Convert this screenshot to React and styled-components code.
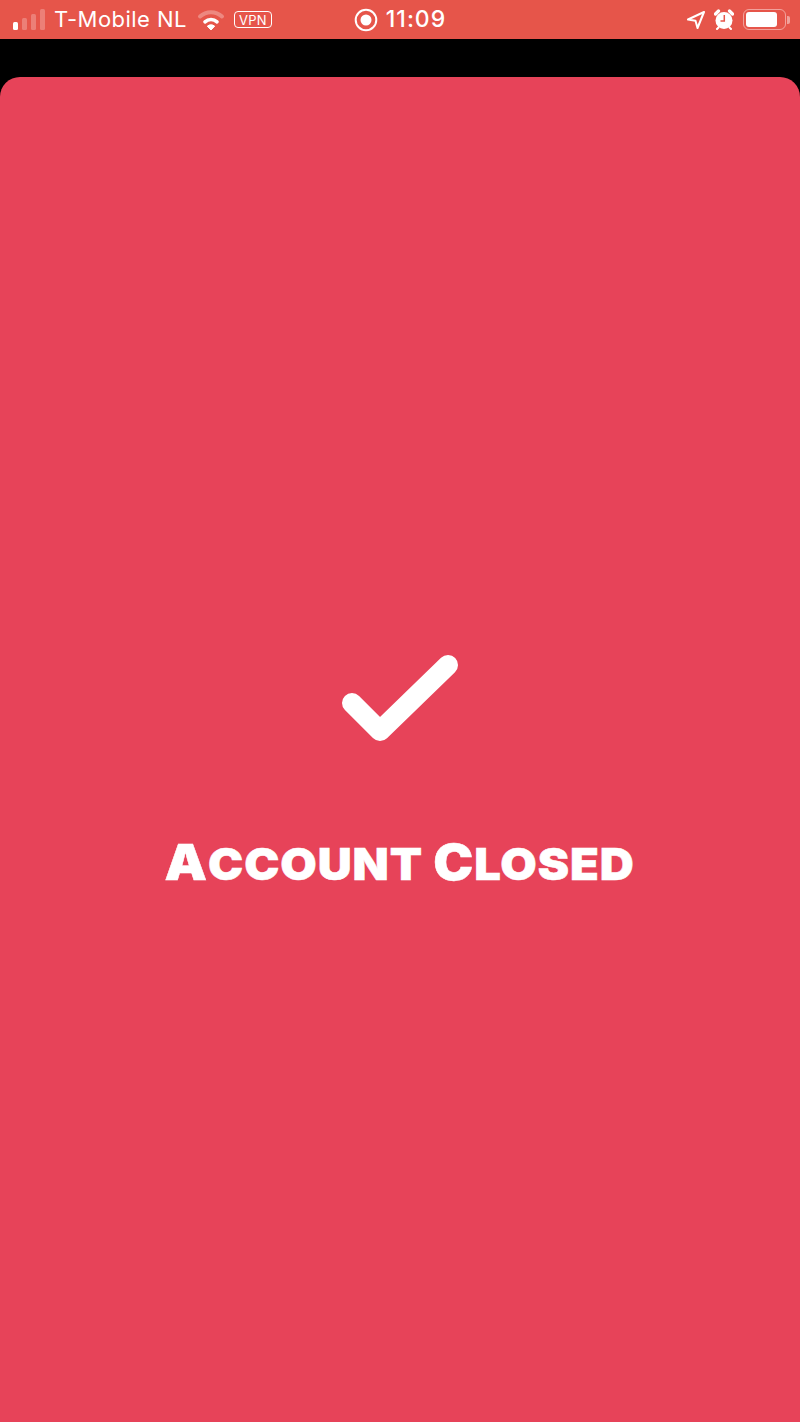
import React from 'react';
import styled, { createGlobalStyle } from 'styled-components';

const GlobalStyle = createGlobalStyle`
  html, body, #root {
    margin: 0;
    padding: 0;
    height: 100%;
  }
  body {
    background-color: #000;
    font-family: Inter, "Liberation Sans", Arial, sans-serif;
  }
`;

const Page = styled.div`
  width: 800px;
  height: 1422px;
  display: flex;
  flex-direction: column;
  overflow: hidden;
  background-color: #000;
`;

const StatusBar = styled.div`
  height: 39px;
  flex-shrink: 0;
  display: grid;
  grid-template-columns: 1fr auto 1fr;
  align-items: center;
  background-color: #e6554a;
  color: #fff;
  box-sizing: border-box;
  padding: 0 10px 0 13px;
`;

const Group = styled.div`
  display: flex;
  align-items: center;
  justify-content: ${props => props.$end ? 'flex-end' : 'flex-start'};
`;

const ClockGroup = styled(Group)`
  margin-left: -3px;
`;

const Signal = styled.div`
  display: flex;
  align-items: flex-end;
  gap: 4px;
  height: 21px;
  margin-right: 9px;
`;

const SignalBar = styled.span`
  width: 5px;
  height: ${props => props.$height}px;
  border-radius: 1.5px;
  background-color: ${props => props.$on ? '#fff' : 'rgba(255, 255, 255, 0.25)'};
`;

const Carrier = styled.span`
  font-size: 22px;
  line-height: 39px;
  letter-spacing: 0.45px;
  margin-right: 10px;
  white-space: nowrap;
`;

const VpnBadge = styled.span`
  width: 38px;
  height: 17px;
  box-sizing: border-box;
  margin-left: 9px;
  display: flex;
  align-items: center;
  justify-content: center;
  border: 1.5px solid #fff;
  border-radius: 4px;
  font-size: 13px;
  letter-spacing: 0.2px;
`;

const Clock = styled.span`
  font-size: 23px;
  line-height: 39px;
  font-weight: 500;
  letter-spacing: 1px;
  margin-left: 8px;
`;

const AlarmIcon = styled.svg`
  margin-left: 9px;
`;

const Battery = styled.div`
  display: flex;
  align-items: center;
  margin-left: 9px;
`;

const BatteryBody = styled.div`
  width: 43px;
  height: 21px;
  box-sizing: border-box;
  padding: 2px;
  border: 1.5px solid rgba(255, 255, 255, 0.45);
  border-radius: 6px;
  display: flex;
  justify-content: flex-start;
`;

const BatteryFill = styled.div`
  width: 31px;
  border-radius: 3px;
  background-color: #fff;
`;

const BatteryCap = styled.div`
  width: 3px;
  height: 8px;
  margin-left: 1px;
  border-radius: 0 2px 2px 0;
  background-color: rgba(255, 255, 255, 0.45);
`;

const BlackBand = styled.div`
  height: 38px;
  flex-shrink: 0;
`;

const Card = styled.div`
  flex: 1;
  display: flex;
  flex-direction: column;
  align-items: center;
  padding-top: 577px;
  background-color: #e74359;
  border-radius: 20px 20px 0 0;
`;

const CheckIcon = styled.svg`
  width: 118px;
  height: 89px;
  display: block;
`;

const Title = styled.h1`
  margin: 94px 0 0;
  font-size: 44px;
  line-height: 50px;
  font-weight: 900;
  letter-spacing: 0.85px;
  text-transform: uppercase;
  white-space: nowrap;
  color: #fff;
  -webkit-text-stroke: 0.5px #fff;
  transform: scaleX(1.07);
`;

const TitleInitial = styled.span`
  font-size: 50px;
`;

const App = () => (
  <Page>
    <GlobalStyle />
    <StatusBar>
      <Group>
        <Signal>
          <SignalBar $on $height={8} />
          <SignalBar $height={12} />
          <SignalBar $height={16} />
          <SignalBar $height={21} />
        </Signal>
        <Carrier>T-Mobile NL</Carrier>
        <svg width="28" height="22" viewBox="0 0 28 22">
          <path d="M3 7.500C9.200 1.700 18.800 1.700 25 7.500" fill="none" stroke="#fff" strokeOpacity="0.3" strokeWidth="4" strokeLinecap="round" />
          <path d="M8 12.800C11.400 9.700 16.600 9.700 20 12.800" fill="none" stroke="#fff" strokeWidth="3.600" strokeLinecap="round" />
          <path d="M14 21l-3.700-3.800c2-1.800 5.400-1.800 7.400 0z" fill="#fff" stroke="#fff" strokeWidth="1" strokeLinejoin="round" />
        </svg>
        <VpnBadge>VPN</VpnBadge>
      </Group>
      <ClockGroup>
        <svg width="24" height="24" viewBox="0 0 24 24">
          <circle cx="12" cy="12" r="10.300" fill="none" stroke="#fff" strokeWidth="2" />
          <circle cx="12" cy="12" r="5.500" fill="#fff" />
        </svg>
        <Clock>11:09</Clock>
      </ClockGroup>
      <Group $end>
        <svg width="18" height="18" viewBox="0 0 18 18">
          <path d="M17 1 1 8.500l7.500 1.200L10.500 17z" fill="none" stroke="#fff" strokeWidth="2" strokeLinejoin="round" />
        </svg>
        <AlarmIcon width="20" height="21" viewBox="0 0 20 21">
          <circle cx="10" cy="11.500" r="8.500" fill="#fff" />
          <path d="M1.500 5 4.500 2M15.500 2 18.500 5" stroke="#fff" strokeWidth="3.200" strokeLinecap="round" />
          <path d="M4.500 18.500 3 20M15.500 18.500 17 20" stroke="#fff" strokeWidth="2" strokeLinecap="round" />
          <path d="M10.300 6v6H6.500" fill="none" stroke="#e6554a" strokeWidth="1.500" />
        </AlarmIcon>
        <Battery>
          <BatteryBody>
            <BatteryFill />
          </BatteryBody>
          <BatteryCap />
        </Battery>
      </Group>
    </StatusBar>
    <BlackBand />
    <Card>
      <CheckIcon viewBox="0 0 118 89">
        <path d="M11 49 39 77 107 11" fill="none" stroke="#fff" strokeWidth="20" strokeLinecap="round" strokeLinejoin="round" />
      </CheckIcon>
      <Title><TitleInitial>A</TitleInitial>ccount <TitleInitial>C</TitleInitial>losed</Title>
    </Card>
  </Page>
);

export default App;
